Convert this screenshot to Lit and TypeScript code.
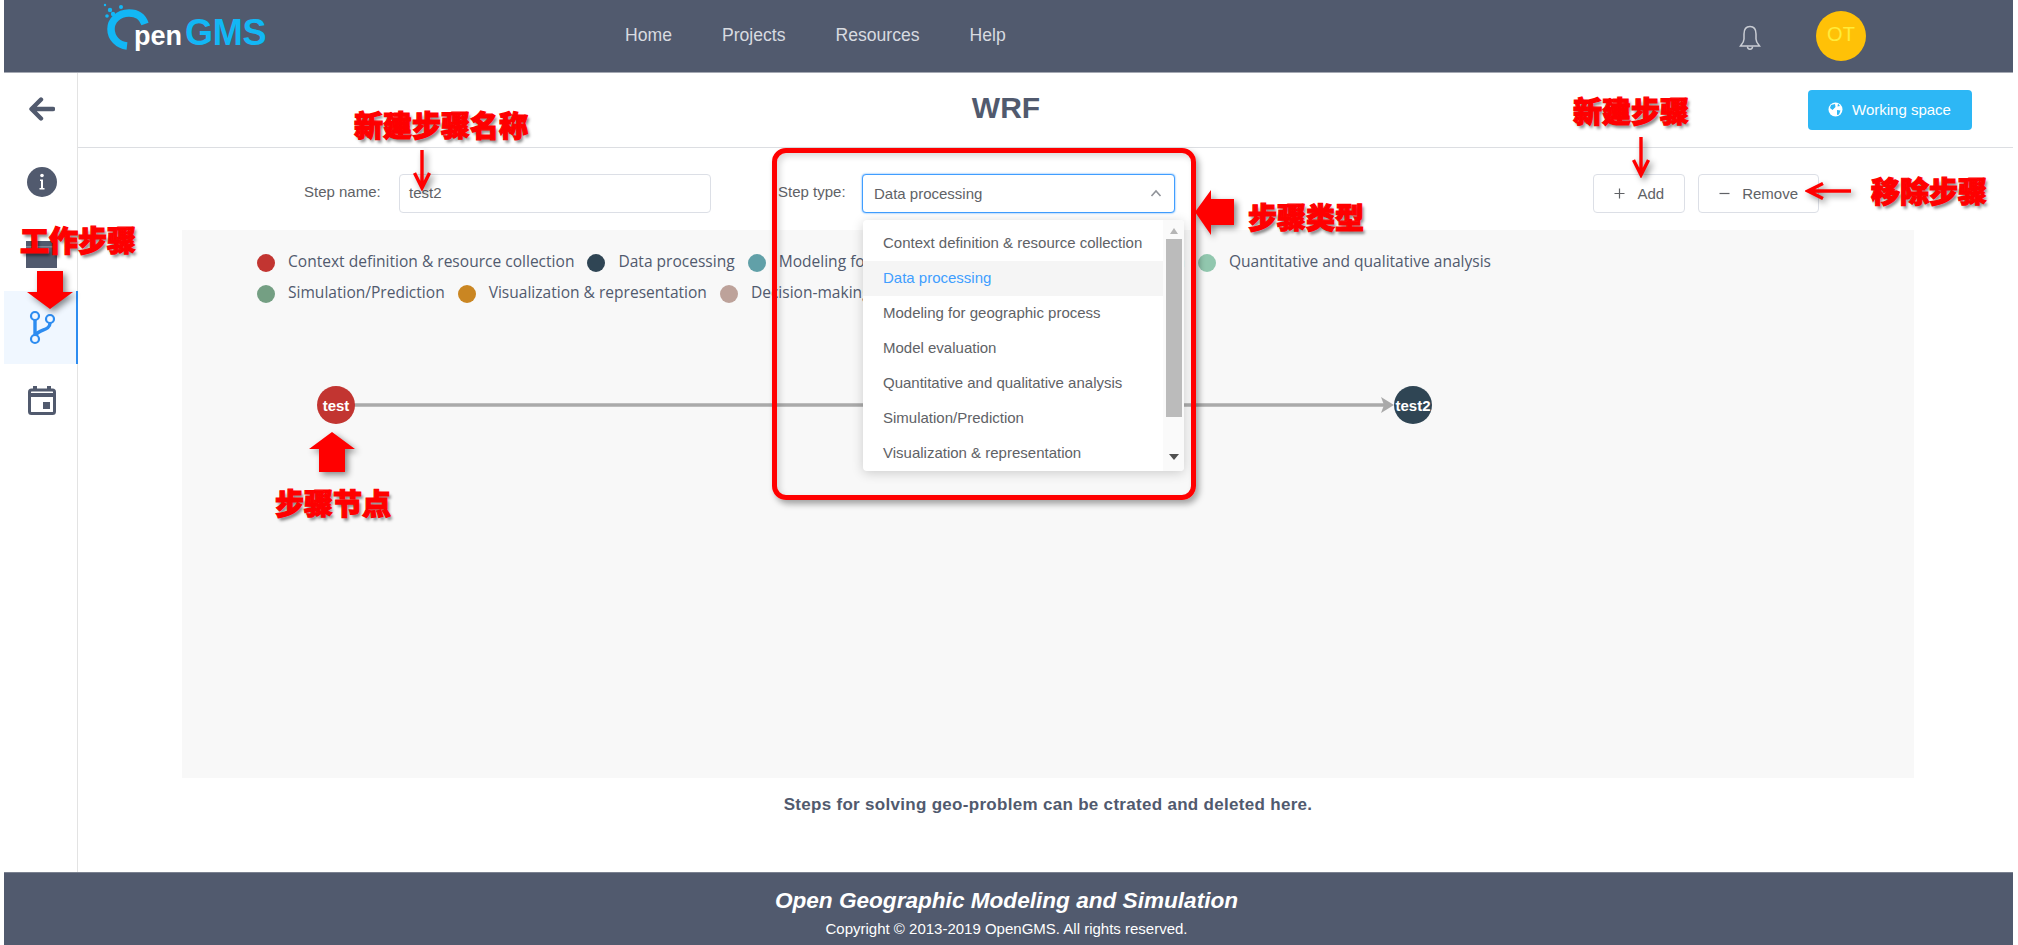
import { LitElement, html, css, svg } from "lit";
import { customElement } from "lit/decorators.js";

const legend = [
  ["Context definition & resource collection", "#c23531"],
  ["Data processing", "#2f4554"],
  ["Modeling for geographic process", "#61a0a8"],
  ["Model evaluation", "#d48265"],
  ["Quantitative and qualitative analysis", "#91c7ae"],
  ["Simulation/Prediction", "#749f83"],
  ["Visualization & representation", "#ca8622"],
  ["Decision-making", "#bda29a"],
];
const options = legend.slice(0, 7).map((l) => l[0]);

@customElement("app-root")
export class AppRoot extends LitElement {
  static styles = css`
    :host { display: block; position: relative; height: 945px; padding: 0 5px 0 4px; box-sizing: border-box; overflow: hidden; font-family: "Liberation Sans", Arial, sans-serif; color: #606266; background: #fff; }
    .header { height: 72px; background: #515a6e; box-shadow: 0 1px 0 #a5a9b3; display: flex; align-items: center; position: relative; z-index: 1; }
    .logo { width: 621px; padding-left: 98px; box-sizing: border-box; display: flex; height: 72px; align-items: flex-start; }
    .logo svg { flex: none; }
    .logo-text { display: flex; align-items: baseline; margin: 12px 0 0 -18px; font-weight: 700; line-height: 42px; }
    .pen { color: #fff; font-size: 27px; }
    .gms { color: #12b7f5; font-size: 36px; margin-left: 3px; letter-spacing: -0.2px; }
    .nav { display: flex; gap: 50px; font-size: 17.6px; color: #d8dbe0; margin-top: -2px; }
    .right { margin-left: auto; padding-right: 147px; display: flex; align-items: center; gap: 55px; }
    .avatar { width: 50px; height: 50px; border-radius: 50%; background: #ffc107; color: #ffeb3b; font-size: 20px; display: flex; align-items: center; justify-content: center; padding-bottom: 4px; box-sizing: border-box; }
    .bell { margin-top: 3px; }
    .body { display: flex; height: 800px; }
    .side { width: 74px; border-right: 1px solid #e3e3e3; flex: none; box-sizing: border-box; }
    .item { height: 73px; display: flex; align-items: center; justify-content: center; box-sizing: border-box; padding-left: 2px; }
    .item.active { background: #f0f7ff; border-right: 2px solid #2d8cf0; width: 74px; padding-left: 4px; }
    .main { flex: 1; min-width: 0; }
    .title-row { height: 76px; border-bottom: 1px solid #dcdee2; box-sizing: border-box; display: flex; align-items: center; padding: 0 41px 0 126px; }
    .title { flex: 1; text-align: center; font-size: 30px; font-weight: 700; color: #515a6e; margin-top: -3px; }
    .work { width: 164px; height: 40px; background: #2db7f5; border-radius: 4px; color: #fff; font-size: 15px; display: flex; align-items: center; gap: 9px; padding-left: 20px; box-sizing: border-box; }
    .toolbar { display: flex; align-items: center; padding: 26px 194px 0 226px; height: 65px; box-sizing: border-box; font-size: 15px; }
    .label { color: #606266; }
    .l1 { width: 95px; margin-top: -4px; }
    .l2 { width: 84px; margin-left: 67px; margin-top: -4px; }
    .input { width: 312px; height: 39px; border: 1px solid #dcdfe6; border-radius: 4px; box-sizing: border-box; display: flex; align-items: center; padding: 0 0 2px 9px; background: #fff; }
    .select { position: relative; width: 313px; height: 39px; border: 1px solid #409eff; box-shadow: 0 0 2px #409eff; border-radius: 4px; box-sizing: border-box; display: flex; align-items: center; justify-content: space-between; padding: 0 12px 1px 11px; background: #fff; }
    .spacer { flex: 1; }
    .btn { height: 39px; border: 1px solid #dcdfe6; border-radius: 4px; box-sizing: border-box; display: flex; align-items: center; padding: 0 20px; background: #fff; gap: 12px; }
    .btn + .btn { margin-left: 13px; }
    .dropdown { position: absolute; top: 45px; left: 0; width: 321px; height: 251px; background: #fff; border-radius: 4px; box-shadow: 0 2px 12px rgba(0, 0, 0, 0.18); z-index: 3; display: flex; overflow: hidden; }
    .opts { flex: 1; padding-top: 6px; }
    .opt { height: 35px; line-height: 34px; padding-left: 20px; font-size: 15px; color: #606266; white-space: nowrap; }
    .opt.sel { background: #f5f5f5; color: #409eff; }
    .bar { width: 21px; flex: none; background: #fafafa; display: flex; flex-direction: column; align-items: center; }
    .up { width: 0; height: 0; border: 4.5px solid transparent; border-top: 0; border-bottom: 6px solid #b5b5b5; margin: 8px 0 5px; }
    .thumb { width: 16px; height: 178px; background: #bbb; }
    .down { width: 0; height: 0; border: 5px solid transparent; border-bottom: 0; border-top: 6px solid #505050; margin-top: 37px; }
    .panel { position: relative; margin: 17px 0 0 104px; width: 1732px; height: 548px; background: #f8f8f8; box-sizing: border-box; padding: 17px 400px 0 75px; }
    .legend { display: flex; flex-wrap: wrap; column-gap: 13px; width: 1250px; }
    .lg { height: 31px; display: flex; align-items: center; gap: 13px; font-family: "Open Sans", sans-serif; font-size: 15.55px; color: #515a6e; white-space: nowrap; }
    .lg .t { margin-top: -3px; }
    .dot { width: 18px; height: 18px; border-radius: 50%; flex: none; }
    .edge { position: absolute; left: 170px; top: 165px; }
    .node { position: absolute; top: 156px; width: 38px; height: 38px; border-radius: 50%; color: #fff; font-size: 15px; font-weight: 700; display: flex; align-items: center; justify-content: center; }
    .n1 { left: 135px; background: #c23531; }
    .n2 { left: 1212px; background: #2f4554; }
    .note { margin-top: 17px; text-align: center; font-size: 17px; font-weight: 700; color: #515a6e; padding-left: 5px; letter-spacing: 0.3px; }
    .footer { height: 73px; background: #515a6e; border-top: 1px solid #7a8190; box-sizing: border-box; color: #fff; text-align: center; padding-right: 4px; }
    .f1 { font-size: 22.6px; font-weight: 700; font-style: italic; margin-top: 15px; line-height: 26px; }
    .f2 { font-size: 15px; margin-top: 6px; line-height: 18px; }
    .cn { position: absolute; z-index: 5; color: #f00; font-family: "Noto Sans CJK SC", sans-serif; font-size: 29px; font-weight: 900; line-height: 34px; white-space: nowrap; text-shadow: 2px 3px 3px rgba(0, 0, 0, 0.45); -webkit-text-stroke: 1.2px #f00; }
    .a1 { left: 354px; top: 107px; }
    .a2 { left: 20px; top: 222px; }
    .a3 { left: 1573px; top: 93px; }
    .a4 { left: 1871px; top: 173px; }
    .a5 { left: 1248px; top: 199px; }
    .a6 { left: 275px; top: 485px; }
    .ar { position: absolute; z-index: 5; filter: drop-shadow(3px 3px 3px rgba(0, 0, 0, 0.45)); }
    .r1 { left: 413px; top: 150px; }
    .r2 { left: 1632px; top: 137px; }
    .r3 { left: 1805px; top: 182px; }
    .r4 { left: 27px; top: 271px; }
    .r5 { left: 1195px; top: 190px; }
    .r6 { left: 309px; top: 432px; }
    .box { position: absolute; z-index: 4; left: 772px; top: 148px; width: 424px; height: 352px; box-sizing: border-box; border: 5px solid #f00; border-radius: 14px; box-shadow: 3px 4px 6px rgba(0, 0, 0, 0.35), inset 3px 3px 6px rgba(0, 0, 0, 0.15); }
  `;

  render() {
    const thin = (d: string, w: number, h: number, cls: string) => html`<svg class="ar ${cls}" width=${w} height=${h} viewBox="0 0 ${w} ${h}" fill="none" stroke="#f00" stroke-width="3.4">${svg`<path d=${d} />`}</svg>`;
    const solid = (d: string, w: number, h: number, cls: string) => html`<svg class="ar ${cls}" width=${w} height=${h} viewBox="0 0 ${w} ${h}" fill="#f00">${svg`<path d=${d} />`}</svg>`;
    return html`
      <div class="header">
        <div class="logo">
          <svg width="50" height="60" viewBox="0 0 50 60" fill="none">
            <path d="M43 24 C40 15 33 13 27 13 C16 13 9 21 9 29 C9 38 16 45 25 46" stroke="#12b7f5" stroke-width="7.5" />
            <g fill="#12b7f5"><circle cx="3" cy="5" r="1.2" /><circle cx="8" cy="10" r="2.2" /><circle cx="19" cy="7" r="2" /><circle cx="5" cy="16" r="1.8" /><circle cx="11" cy="14" r="2.2" /></g>
          </svg>
          <div class="logo-text"><span class="pen">pen</span><span class="gms">GMS</span></div>
        </div>
        <div class="nav"><span>Home</span><span>Projects</span><span>Resources</span><span>Help</span></div>
        <div class="right">
          <svg class="bell" width="22" height="26" viewBox="0 0 22 26" fill="none" stroke="#c9ccd3" stroke-width="1.5"><path d="M11 1.5 C6.5 1.5 5 5 5 9 V14 C5 17 3 19 1.5 21 H20.5 C19 19 17 17 17 14 V9 C17 5 15.5 1.5 11 1.5 Z" /><path d="M8.5 21.5 C8.5 25 13.5 25 13.5 21.5" /></svg>
          <div class="avatar">OT</div>
        </div>
      </div>
      <div class="body">
        <div class="side">
          <div class="item"><svg width="26" height="24" viewBox="0 0 26 24" fill="none" stroke="#515a6e" stroke-width="4.4" stroke-linecap="round" stroke-linejoin="round"><path d="M24 12 H3 M12 2.5 L2.5 12 L12 21.5" /></svg></div>
          <div class="item"><svg width="30" height="30" viewBox="0 0 30 30"><circle cx="15" cy="15" r="15" fill="#515a6e" /><circle cx="15" cy="8.5" r="1.8" fill="#fff" /><path d="M13 12.5 H16 V21 H17.5 V22.5 H12.5 V21 H14 V14 H13 Z" fill="#fff" /></svg></div>
          <div class="item"><svg width="33" height="29" viewBox="0 0 33 29"><path d="M1 1 H32 V28 H1 Z" fill="#515a6e" /><rect x="1" y="6" width="31" height="1.5" fill="#7e8595" /></svg></div>
          <div class="item active"><svg width="26" height="36" viewBox="0 0 26 36" fill="none" stroke="#2d8cf0" stroke-width="2.2"><circle cx="6" cy="6" r="4" /><circle cx="21" cy="9" r="4" /><circle cx="6" cy="29" r="4" /><path d="M6 10 V25 M21 13 C21 21 10 19 7 25" stroke-width="3.4" /></svg></div>
          <div class="item"><svg width="28" height="29" viewBox="0 0 28 29" fill="none" stroke="#515a6e" stroke-width="3"><rect x="1.5" y="4" width="25" height="23.5" rx="2" /><path d="M1 9 H27 M7 0 V5 M21 0 V5" stroke-width="4" /><rect x="15" y="16" width="7" height="7" fill="#515a6e" stroke="none" /></svg></div>
        </div>
        <div class="main">
          <div class="title-row">
            <div class="title">WRF</div>
            <div class="work">
              <svg width="15" height="15" viewBox="0 0 15 15"><circle cx="7.5" cy="7.5" r="7" fill="#fff" /><path d="M3 3 L7 2 L7.5 5 L4.5 8 L2 6 Z M9 8 L12.5 8.5 L11 12.5 L9 13 Z M10 1.5 L12 4 L9.5 4.5 Z" fill="#2db7f5" /></svg>
              <span>Working space</span>
            </div>
          </div>
          <div class="toolbar">
            <div class="label l1">Step name:</div>
            <div class="input">test2</div>
            <div class="label l2">Step type:</div>
            <div class="select">
              <span>Data processing</span>
              <svg width="12" height="8" viewBox="0 0 12 8" fill="none" stroke="#909399" stroke-width="1.6"><path d="M1.5 7 L6 2 L10.5 7" /></svg>
              <div class="dropdown">
                <div class="opts">${options.map((o, i) => html`<div class="opt ${i === 1 ? "sel" : ""}">${o}</div>`)}</div>
                <div class="bar"><div class="up"></div><div class="thumb"></div><div class="down"></div></div>
              </div>
            </div>
            <div class="spacer"></div>
            <div class="btn">
              <svg width="11" height="11" viewBox="0 0 11 11" stroke="#606266" stroke-width="1.2"><path d="M5.5 0.5 V10.5 M0.5 5.5 H10.5" /></svg>
              <span>Add</span>
            </div>
            <div class="btn">
              <svg width="11" height="11" viewBox="0 0 11 11" stroke="#606266" stroke-width="1.2"><path d="M0.5 5.5 H10.5" /></svg>
              <span>Remove</span>
            </div>
          </div>
          <div class="panel">
            <div class="legend">
              ${legend.map(([t, c]) => html`<div class="lg"><span class="dot" style="background:${c}"></span><span class="t">${t}</span></div>`)}
            </div>
            <svg class="edge" width="1045" height="20" viewBox="0 0 1045 20" fill="none"><path d="M0 10 H1035" stroke="#aaa" stroke-width="3.6" /><path d="M1029 2 L1042 10 L1029 18 L1032 10 Z" fill="#aaa" /></svg>
            <div class="node n1">test</div>
            <div class="node n2">test2</div>
          </div>
          <div class="note">Steps for solving geo-problem can be ctrated and deleted here.</div>
        </div>
      </div>
      <div class="footer">
        <div class="f1">Open Geographic Modeling and Simulation</div>
        <div class="f2">Copyright © 2013-2019 OpenGMS. All rights reserved.</div>
      </div>
      <div class="box"></div>
      <div class="cn a1">新建步骤名称</div>
      <div class="cn a2">工作步骤</div>
      <div class="cn a3">新建步骤</div>
      <div class="cn a4">移除步骤</div>
      <div class="cn a5">步骤类型</div>
      <div class="cn a6">步骤节点</div>
      ${thin("M9 0 V38 M1.5 23 L9 38 L16.5 23", 18, 41, "r1")}
      ${thin("M9 0 V38 M1.5 23 L9 38 L16.5 23", 18, 41, "r2")}
      ${thin("M46 9 H4 M18 1.5 L3 9 L18 16.5", 46, 18, "r3")}
      ${solid("M10 0 H36 V21 H46 L23 38 L0 21 H10 Z", 46, 38, "r4")}
      ${solid("M39 9 V35 H16 V45 L0 22 L16 0 V9 Z", 39, 45, "r5")}
      ${solid("M23 0 L46 17 H36 V40 H10 V17 H0 Z", 46, 40, "r6")}
    `;
  }
}
